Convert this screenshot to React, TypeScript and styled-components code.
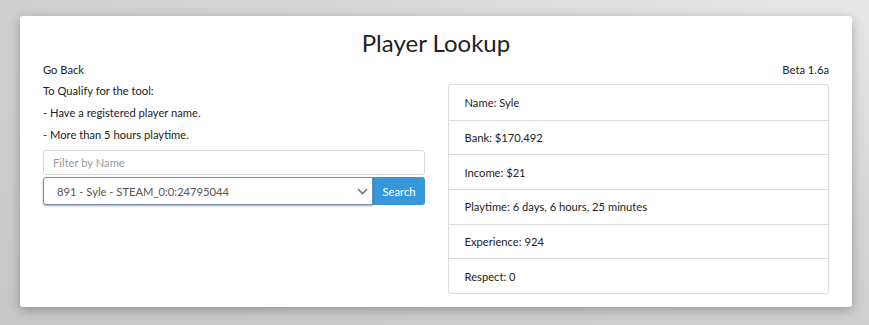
import React from "react";
import styled, { createGlobalStyle } from "styled-components";

const GlobalStyle = createGlobalStyle`
  html, body {
    margin: 0;
    padding: 0;
  }
  body {
    min-height: 325px;
    font-family: Lato, "Open Sans", sans-serif;
    color: #222;
    background: radial-gradient(ellipse at 100% 0%, #e8e8e8 0%, #d6d6d6 45%, #c7c7c7 100%);
  }
`;

const Page = styled.div`
  padding: 16px 17px 18px 20px;
`;

const Card = styled.div`
  background: #fff;
  border-radius: 3px;
  box-shadow: 0 3px 12px rgba(0, 0, 0, 0.28);
  padding: 9px 23px 13px;
`;

const Title = styled.h1`
  margin: 0;
  text-align: center;
  font-size: 24px;
  font-weight: 400;
  line-height: 36px;
  color: #222;
`;

const Columns = styled.div`
  display: grid;
  grid-template-columns: 1fr 1fr;
  gap: 23px;
`;

const Column = styled.div`
  display: flex;
  flex-direction: column;
`;

const Line = styled.div<{ $right?: boolean; $gap?: number }>`
  font-size: 11.2px;
  line-height: 18px;
  color: #222;
  text-align: ${(p) => (p.$right ? "right" : "left")};
  margin-bottom: ${(p) => p.$gap ?? 4}px;
`;

const FilterInput = styled.input`
  box-sizing: border-box;
  height: 25px;
  width: 100%;
  border: 1px solid #d6d6d6;
  border-radius: 3px;
  padding: 0 9px;
  font-family: inherit;
  font-size: 11.2px;
  color: #333;
  margin-top: 2px;
  &::placeholder {
    color: #9a9a9a;
  }
`;

const SearchRow = styled.div`
  display: flex;
  margin-top: 2px;
  height: 28px;
`;

const SelectWrap = styled.div`
  position: relative;
  flex: 1;
`;

const Select = styled.select`
  box-sizing: border-box;
  appearance: none;
  width: 100%;
  height: 28px;
  border: 1px solid #7290b2;
  border-radius: 3px 0 0 3px;
  box-shadow: 0 1px 2px rgba(0, 0, 0, 0.35);
  padding: 0 28px 0 13px;
  font-family: inherit;
  font-size: 11.2px;
  color: #555;
  background: #fff;
  outline: none;
`;

const Chevron = styled.svg`
  position: absolute;
  right: 5px;
  top: 11px;
  pointer-events: none;
`;

const SearchButton = styled.button`
  height: 28px;
  border: none;
  border-radius: 0 3px 3px 0;
  background: #3498db;
  color: #fff;
  font-family: inherit;
  font-size: 11.2px;
  padding: 0 9px 0 10px;
`;

const List = styled.div`
  border: 1px solid #dcdcdc;
  border-radius: 3px;
  margin-top: 1px;
`;

const Item = styled.div`
  height: 34.67px;
  box-sizing: border-box;
  display: flex;
  align-items: center;
  padding: 0 16px;
  font-size: 11.2px;
  color: #222;
  & + & {
    border-top: 1px solid #dcdcdc;
  }
`;

const stats = [
  "Name: Syle",
  "Bank: $170,492",
  "Income: $21",
  "Playtime: 6 days, 6 hours, 25 minutes",
  "Experience: 924",
  "Respect: 0",
];

export default function App() {
  return (
    <>
      <GlobalStyle />
      <Page>
        <Card>
          <Title>Player Lookup</Title>
          <Columns>
            <Column>
              <Line $gap={3}>Go Back</Line>
              <Line>To Qualify for the tool:</Line>
              <Line>- Have a registered player name.</Line>
              <Line>- More than 5 hours playtime.</Line>
              <FilterInput placeholder="Filter by Name" />
              <SearchRow>
                <SelectWrap>
                  <Select defaultValue="891">
                    <option value="891">891 - Syle - STEAM_0:0:24795044</option>
                  </Select>
                  <Chevron width="11" height="7" viewBox="0 0 11 7">
                    <path d="M1 1l4.5 4.5L10 1" fill="none" stroke="#6a7680" strokeWidth="1.6" />
                  </Chevron>
                </SelectWrap>
                <SearchButton>Search</SearchButton>
              </SearchRow>
            </Column>
            <Column>
              <Line $right $gap={4}>Beta 1.6a</Line>
              <List>
                {stats.map((s) => (
                  <Item key={s}>{s}</Item>
                ))}
              </List>
            </Column>
          </Columns>
        </Card>
      </Page>
    </>
  );
}
